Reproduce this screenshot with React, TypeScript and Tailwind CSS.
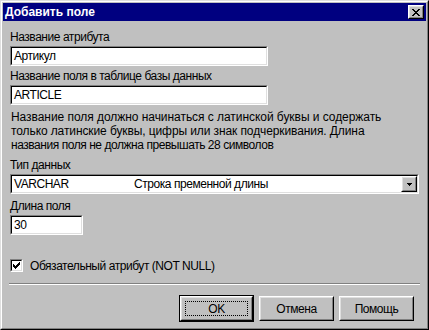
import type React from "react"

const font = "font-['Liberation_Sans',Arial,sans-serif]"

function Sunken({ className, children }: { className?: string; children?: React.ReactNode }) {
  return (
    <div className={`border border-t-[#808080] border-l-[#808080] border-b-white border-r-white ${className ?? ""}`}>
      <div className="flex h-full items-center border border-t-black border-l-black border-b-[#dfdfdf] border-r-[#dfdfdf] bg-white">
        {children}
      </div>
    </div>
  )
}

function Raised({ className, children }: { className?: string; children?: React.ReactNode }) {
  return (
    <div className={`border border-t-white border-l-white border-b-black border-r-black bg-[#c0c0c0] ${className ?? ""}`}>
      <div className="flex h-full w-full items-center justify-center border border-t-[#dfdfdf] border-l-[#dfdfdf] border-b-[#808080] border-r-[#808080]">
        {children}
      </div>
    </div>
  )
}

function Label({ className, children }: { className?: string; children: React.ReactNode }) {
  return <div className={`leading-[14px] ${className ?? ""}`}>{children}</div>
}

export default function App() {
  return (
    <div className={`${font} h-[330px] w-[429px] text-[12px] tracking-[-0.45px] text-black`}>
      <div className="h-full border border-t-[#dfdfdf] border-l-[#dfdfdf] border-b-black border-r-black">
        <div className="flex h-full flex-col border border-t-white border-l-white border-b-[#808080] border-r-[#808080] bg-[#c0c0c0] p-[1px]">
          {/* Title bar */}
          <div className="flex h-[18px] shrink-0 items-center justify-between bg-[#000080] pl-[2px] pr-[2px]">
            <span className="text-[12px] font-bold leading-none tracking-normal text-white">Добавить поле</span>
            <Raised className="h-[14px] w-[16px]">
              <svg width="8" height="7" viewBox="0 0 8 7" shapeRendering="crispEdges">
                <path d="M0 0h2v1h-2zM6 0h2v1h-2zM1 1h2v1h-2zM5 1h2v1h-2zM2 2h4v1h-4zM3 3h2v1h-2zM2 4h4v1h-4zM1 5h2v1h-2zM5 5h2v1h-2zM0 6h2v1h-2zM6 6h2v1h-2z" fill="black" />
              </svg>
            </Raised>
          </div>

          {/* Body */}
          <div className="flex flex-1 flex-col pl-[7px] pr-[7px]">
            <Label className="mb-[2px] mt-[9px]">Название атрибута</Label>
            <Sunken className="h-[20px] w-[258px]">
              <span className="pl-[2px] leading-none">Артикул</span>
            </Sunken>

            <Label className="mb-[2px] mt-[3px]">Название поля в таблице базы данных</Label>
            <Sunken className="h-[20px] w-[258px]">
              <span className="pl-[2px] leading-none">ARTICLE</span>
            </Sunken>

            {/* the lines are broken as in the original dialog */}
            <p className="mt-[5px] pl-[1px] leading-[14px]">
              <span className="tracking-[-0.05px]">Название поля должно начинаться с латинской буквы и содержать</span>
              <br />
              <span className="tracking-[-0.1px]">только латинские буквы, цифры или знак подчеркивания. Длина</span>
              <br />
              названия поля не должна превышать 28 символов
            </p>

            <Label className="mb-[2px] mt-[6px]">Тип данных</Label>
            <Sunken className="h-[20px] w-[409px]">
              <span className="w-[122px] pl-[2px] leading-none">VARCHAR</span>
              <span className="flex-1 leading-none">Строка пременной длины</span>
              <Raised className="h-full w-[16px]">
                <svg width="5" height="3" viewBox="0 0 5 3" shapeRendering="crispEdges">
                  <path d="M0 0h5v1h-5zM1 1h3v1h-3zM2 2h1v1h-1z" fill="black" />
                </svg>
              </Raised>
            </Sunken>

            <Label className="mb-[2px] mt-[5px]">Длина поля</Label>
            <Sunken className="h-[20px] w-[73px]">
              <span className="pl-[2px] leading-none">30</span>
            </Sunken>

            <div className="mt-[24px] flex items-center gap-[7px]">
              <Sunken className="h-[13px] w-[13px]">
                <svg width="9" height="9" viewBox="0 0 9 9" shapeRendering="crispEdges">
                  <path d="M7 1h1v3h-1zM6 2h1v3h-1zM5 3h1v3h-1zM4 4h1v3h-1zM3 5h1v3h-1zM2 4h1v3h-1zM1 3h1v3h-1z" fill="black" />
                </svg>
              </Sunken>
              <span className="leading-none">Обязательный атрибут (NOT NULL)</span>
            </div>

            <div className="-ml-[1px] mt-[11px] w-[411px] border-b border-t border-b-white border-t-[#808080]" />

            <div className="mt-[10px] flex justify-end gap-[5px] pr-[5px]">
              <div className="h-[27px] w-[75px] border border-black">
                <Raised className="h-full w-full">
                  <div className="flex h-[15px] w-[63px] items-center justify-center border border-dotted border-black leading-none">
                    OK
                  </div>
                </Raised>
              </div>
              <Raised className="mt-[1px] h-[25px] w-[75px]">
                <span className="leading-none">Отмена</span>
              </Raised>
              <Raised className="mt-[1px] h-[25px] w-[75px]">
                <span className="leading-none">Помощь</span>
              </Raised>
            </div>
          </div>
        </div>
      </div>
    </div>
  )
}
